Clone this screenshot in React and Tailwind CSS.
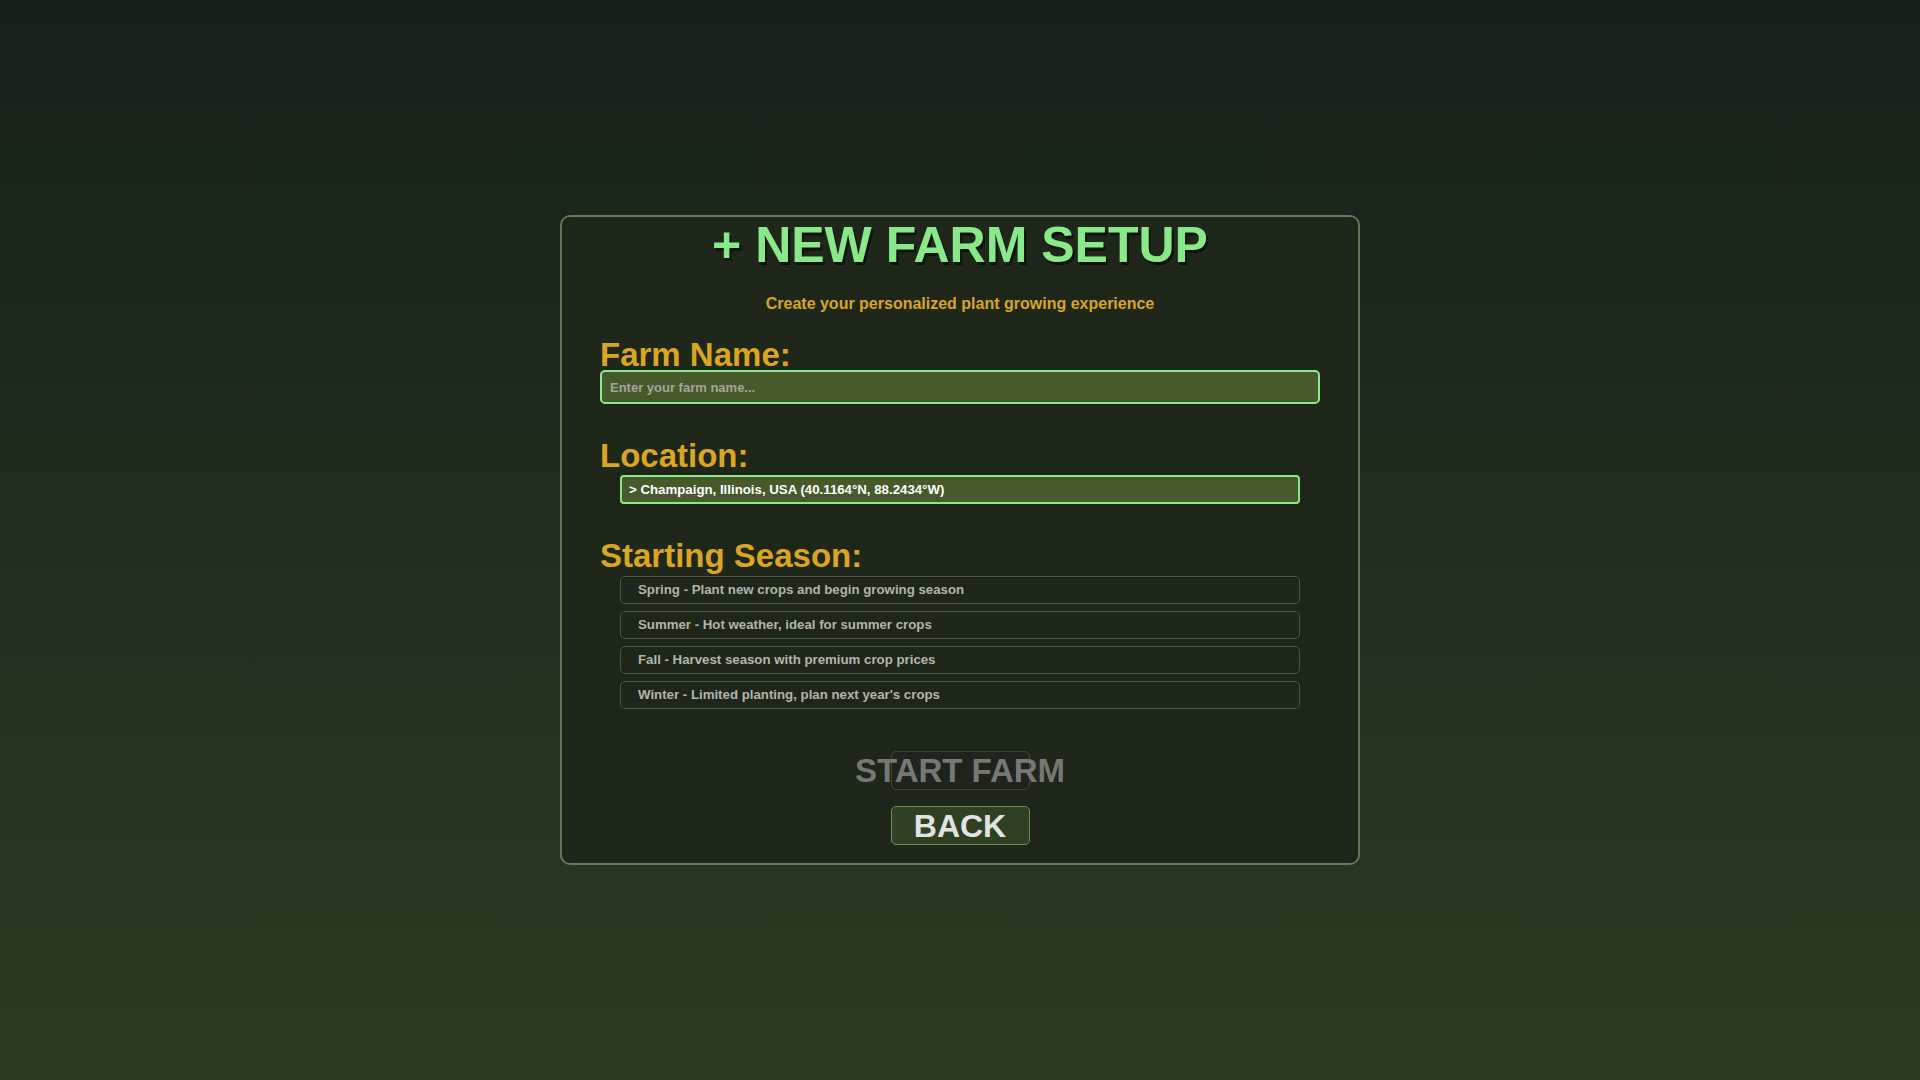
const SEASONS = [
  'Spring - Plant new crops and begin growing season',
  'Summer - Hot weather, ideal for summer crops',
  'Fall - Harvest season with premium crop prices',
  "Winter - Limited planting, plan next year's crops",
]

function Label({ children, className = '' }) {
  return (
    <div className={`text-[33px] font-bold text-[#daa520] ${className}`}>{children}</div>
  )
}

export default function App() {
  return (
    <div
      className="min-h-screen w-full flex items-center justify-center bg-gradient-to-b from-[#17211a] to-[#2c3b22]"
      style={{ fontFamily: '"Liberation Sans", Arial, sans-serif' }}
    >
      <div className="w-[800px] bg-[#1e2719] border-2 border-[#627858] rounded-[10px] px-[38px] pt-[2px] pb-[18px] flex flex-col">
        <h1 className="text-center text-[50px] leading-[52px] font-bold text-[#89e889] [text-shadow:2px_3px_0_#0b1208]">
          + NEW FARM SETUP
        </h1>
        <p className="mt-[21px] text-center text-base leading-6 font-bold text-[#daa520]">
          Create your personalized plant growing experience
        </p>

        <Label className="mt-[23px] leading-[31px]">Farm Name:</Label>
        <input
          className="h-[34px] w-full bg-[#465a2c] border-2 border-[#8ee88a] rounded-[5px] px-[8px] text-[13px] font-bold text-white placeholder:text-[#a3a59a] outline-none"
          placeholder="Enter your farm name..."
        />

        <Label className="mt-[35px] leading-[33px]">Location:</Label>
        <div className="mt-[3px] mx-[20px] h-[29px] flex items-center bg-[#465a2c] border-2 border-[#8ee88a] rounded-[4px] px-[7px] text-[13.25px] font-bold text-white">
          &gt; Champaign, Illinois, USA (40.1164°N, 88.2434°W)
        </div>

        <Label className="mt-[35px] leading-[33px]">Starting Season:</Label>
        <div className="mt-[4px] mx-[20px] flex flex-col gap-[7px]">
          {SEASONS.map((s) => (
            <div
              key={s}
              className="h-[28px] flex items-center border border-[#4b5a3c] rounded-[5px] px-[17px] text-[13.25px] font-bold text-[#b3b5ab]"
            >
              {s}
            </div>
          ))}
        </div>

        <div className="mt-[42px] flex flex-col items-center gap-[16px]">
          <button className="w-[139px] h-[39px] flex items-center justify-center bg-[#1f251d] border border-[#3c4538] rounded-[5px] text-[33px] font-bold text-[#767876] whitespace-nowrap">
            START FARM
          </button>
          <button className="w-[139px] h-[39px] flex items-center justify-center bg-[#2f4023] border border-[#6b8a5c] rounded-[5px] text-[32px] font-bold text-[#e2e2e2]">
            BACK
          </button>
        </div>
      </div>
    </div>
  )
}
